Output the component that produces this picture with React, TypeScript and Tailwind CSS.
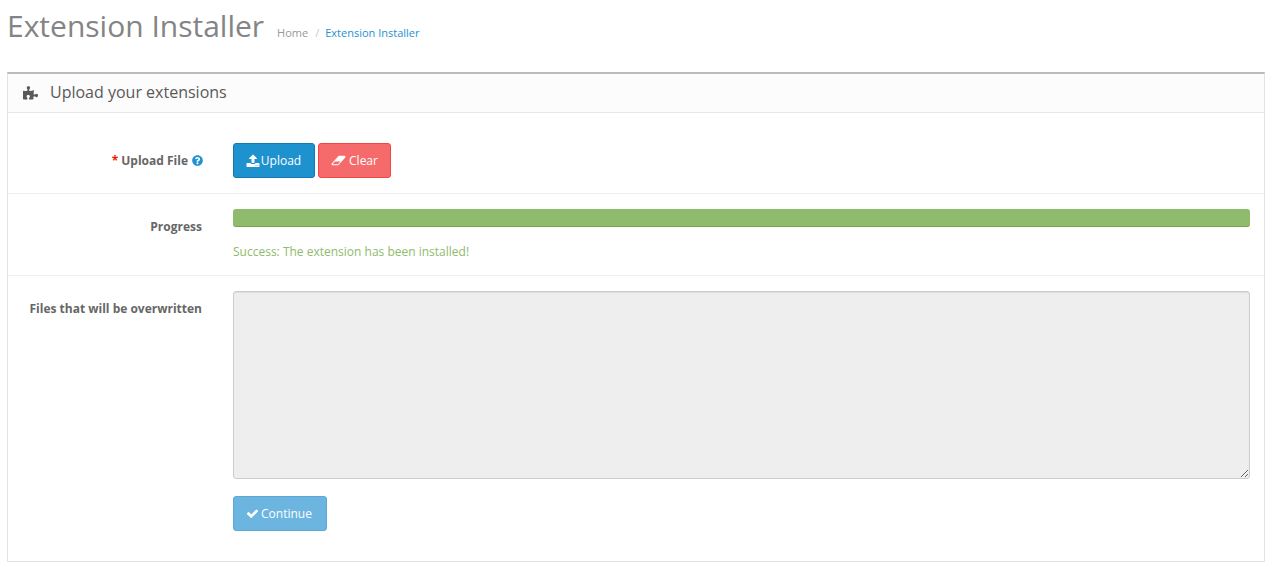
import { FaPuzzlePiece, FaQuestionCircle } from "react-icons/fa";

const labelClass = "w-[194px] shrink-0 text-right text-[12px] font-bold text-[#666666]";

// font awesome 4 glyphs, the 5 ones in react-icons are drawn differently
const UploadIcon = () => (
  <svg viewBox="0 0 1792 1792" fill="currentColor" className="mr-[1px] w-[14px] h-[14px]">
    <path d="M1344 1472q0-26-19-45t-45-19-45 19-19 45 19 45 45 19 45-19 19-45zm256 0q0-26-19-45t-45-19-45 19-19 45 19 45 45 19 45-19 19-45zm128-224v320q0 40-28 68t-68 28h-1472q-40 0-68-28t-28-68v-320q0-40 28-68t68-28h427q21 56 70.5 92t110.5 36h256q61 0 110.5-36t70.5-92h427q40 0 68 28t28 68zm-325-648q-17 40-59 40h-256v448q0 26-19 45t-45 19h-256q-26 0-45-19t-19-45v-448h-256q-42 0-59-40-17-39 14-69l448-448q18-19 45-19t45 19l448 448q31 30 14 69z" />
  </svg>
);

const EraserIcon = () => (
  <svg viewBox="0 0 2048 1792" fill="currentColor" className="mr-[3px] w-[15px] h-[13px]">
    <path d="M960 1408l336-384h-768l-336 384h768zm1013-1077q15 34 9.5 71.5t-30.5 65.5l-896 1024q-38 44-96 44h-768q-38 0-69.5-20.5t-47.5-54.5q-15-34-9.5-71.5t30.5-65.5l896-1024q38-44 96-44h768q38 0 70 20.5t47 54.5z" />
  </svg>
);

const CheckIcon = () => (
  <svg viewBox="0 0 1792 1792" fill="currentColor" className="mr-[2px] w-[13px] h-[13px]">
    <path d="M1671 566q0 40-28 68l-724 724-136 136q-28 28-68 28t-68-28l-136-136-362-362q-28-28-28-68t28-68l136-136q28-28 68-28t68 28l294 295 656-657q28-28 68-28t68 28l136 136q28 28 28 68z" />
  </svg>
);

const App = () => {
  return (
    <div className="w-[1272px] h-[575px] overflow-hidden bg-white px-[7px] font-['Open_Sans',sans-serif]">
      <div className="h-[72px] flex items-start">
        <h1 className="mt-[5px] text-[30px] leading-[42px] font-normal text-[#848484]">Extension Installer</h1>
        <div className="ml-[13px] mt-[25px] flex items-center text-[11px] leading-[16px]">
          <span className="text-[#999999]">Home</span>
          <span className="ml-[7px] mr-[6px] text-[#cccccc]">/</span>
          <span className="text-[#1e91cf]">Extension Installer</span>
        </div>
      </div>

      <div className="h-[490px] border border-t-2 border-[#e3e3e3] border-t-[#bbbbbb]">
        <div className="h-[39px] flex items-center border-b border-[#e8e8e8] bg-[#fcfcfc] pl-[15px]">
          <FaPuzzlePiece className="w-[15px] h-[14px] text-[#595959]" />
          <h3 className="ml-[12px] -mt-[2px] text-[16px] font-normal text-[#595959]">Upload your extensions</h3>
        </div>

        <div className="h-[81px] flex items-start border-b border-[#ededed] pt-[30px]">
          <div className="w-[195px] shrink-0 h-[35px] flex items-center justify-end text-[12px] font-bold text-[#666666]">
            <span className="mr-[3px] text-[#f01e00]">*</span>
            <span>Upload File</span>
            <FaQuestionCircle className="ml-[4px] w-[11px] h-[11px] text-[#1e91cf]" />
          </div>
          <div className="ml-[30px] flex gap-[3px]">
            <button className="w-[82px] h-[35px] flex items-center justify-center rounded-[3px] border border-[#1978ab] bg-[#1e91cf] pr-[1px] text-[12px] text-white">
              <UploadIcon />
              Upload
            </button>
            <button className="w-[73px] h-[35px] flex items-center justify-center rounded-[3px] border border-[#f24545] bg-[#f56b6b] text-[12px] text-white">
              <EraserIcon />
              Clear
            </button>
          </div>
        </div>

        <div className="h-[82px] flex items-start border-b border-[#ededed] pt-[15px]">
          <div className={`${labelClass} h-[35px] flex items-center justify-end`}>Progress</div>
          <div className="ml-[31px] w-[1017px]">
            <div className="h-[18px] rounded-[3px] bg-[#8fbb6c] shadow-[inset_0_-1px_0_rgba(0,0,0,0.15)]" />
            <p className="mt-[16px] text-[12px] leading-[17px] text-[#8fbb6c]">Success: The extension has been installed!</p>
          </div>
        </div>

        <div className="flex items-start pt-[15px]">
          <div className={`${labelClass} pt-[9px] leading-[18px]`}>Files that will be overwritten</div>
          <div className="ml-[31px] w-[1017px]">
            <textarea
              disabled
              className="block w-full h-[188px] rounded-[3px] border border-[#cccccc] bg-[#eeeeee] shadow-[inset_0_1px_1px_rgba(0,0,0,0.075)]"
            />
            <button className="mt-[17px] w-[94px] h-[35px] flex items-center justify-center rounded-[3px] border border-[#5fa8d3] bg-[#6bb5e0] pr-[2px] text-[12px] text-white">
              <CheckIcon />
              Continue
            </button>
          </div>
        </div>
      </div>
    </div>
  );
};

export default App;
